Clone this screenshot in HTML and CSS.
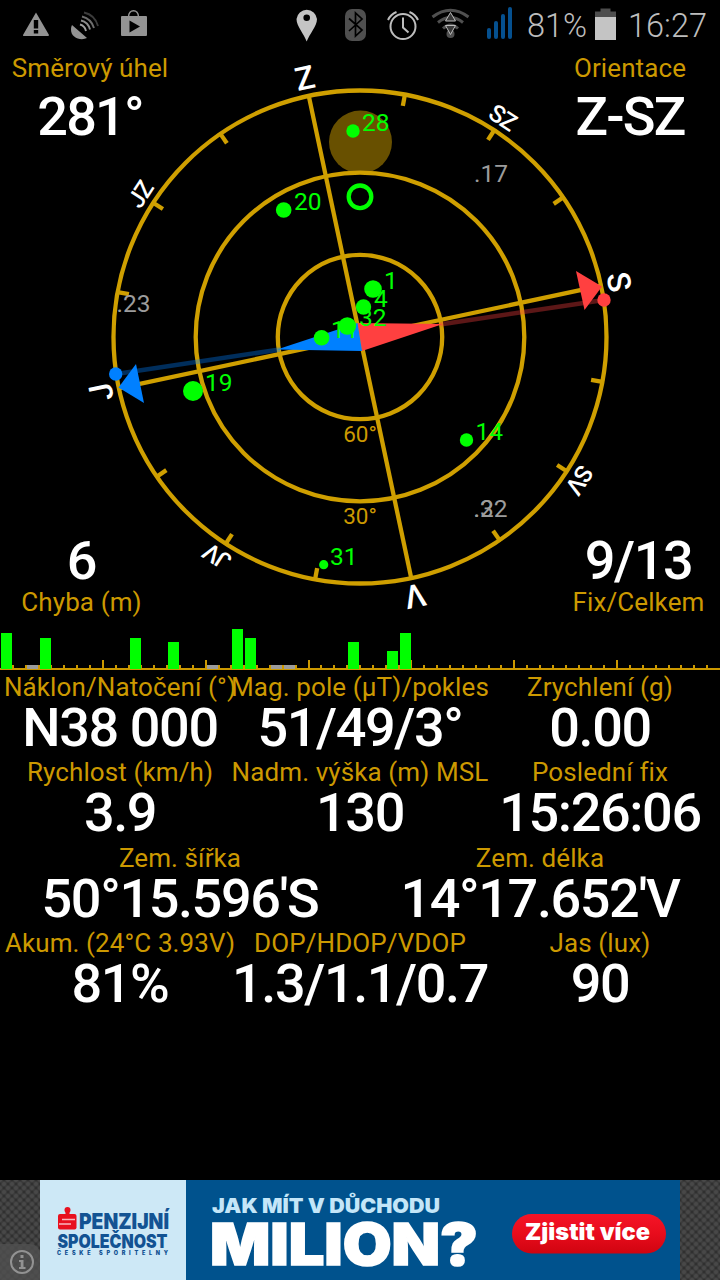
FILE: index.html
```html
<!DOCTYPE html>
<html lang="cs">
<head>
    <meta charset="UTF-8">
    <meta name="viewport" content="width=device-width, initial-scale=1.0">
    <title>GPS Status</title>
    <link rel="stylesheet" href="styles.css">
</head>
<body>
    <header class="status-bar">
        <div class="notifications">
            <svg width="28" height="50" viewBox="22 0 28 50">
                <path fill="#939393" fill-rule="evenodd" d="M36 12.500 L49 35 Q49 36 48 36 H24 Q22.500 36 23 35 Z M33.800 20 V28.500 H38.200 V20 Z M33.800 30 V33.500 H38.200 V30 Z"/>
            </svg>
            <svg width="30" height="50" viewBox="69 0 30 50">
                <path fill="#939393" d="M71 25 L86 38 C80 41 69.500 38 70 29 Q70 27 71 25 Z"/>
                <g fill="none" stroke-width="1.900">
                    <path stroke="#a0a0a0" d="M79 24.500 Q84 26 85 31"/>
                    <path stroke="#8d8d8d" d="M80 20.500 Q87 22 89 29.500"/>
                    <path stroke="#6d6d6d" d="M81 16.500 Q90.500 19 93 28"/>
                    <path stroke="#3c3c3c" d="M83 12.500 Q94 15 97 26"/>
                </g>
            </svg>
            <svg width="28" height="50" viewBox="118 0 28 50">
                <path fill="none" stroke="#939393" stroke-width="1.500" d="M126.500 17 C126.500 8.500 136.500 8.500 136.500 17"/>
                <path fill="#939393" fill-rule="evenodd" d="M119 17 Q119 16 120 16 H144 Q145 16 145 17 V35 Q145 36 144 36 H120 Q119 36 119 35 Z M127.500 20.500 V32.500 L138 26.500 Z"/>
            </svg>
        </div>
        <div class="system">
            <svg width="22" height="50" viewBox="296 0 22 50">
                <path fill="#c4c4c4" fill-rule="evenodd" d="M306.700 41.500 C304 34 296.500 26 296.500 19 A10.300 10.300 0 0 1 317 19 C317 26 309.500 34 306.700 41.500 Z M306.700 14.500 A3.300 3.300 0 1 0 306.700 21.100 A3.300 3.300 0 1 0 306.700 14.500 Z"/>
            </svg>
            <svg width="22" height="50" viewBox="345 0 22 50">
                <rect x="345" y="9" width="21" height="32" rx="7" fill="#4f4f4f"/>
                <path fill="none" stroke="#000" stroke-width="1.700" d="M349 18.500 L362 30 L355.500 36 V13 L362 19 L349 31"/>
            </svg>
            <svg width="34" height="50" viewBox="386 0 34 50">
                <g fill="none" stroke="#bdbdbd" stroke-width="2">
                    <circle cx="403" cy="26.500" r="12.500"/>
                    <path d="M403 17.500 V27.500 L408.500 32.500"/>
                    <path d="M388 20 Q390.500 14.500 396.500 12"/>
                    <path d="M418 20 Q415.500 14.500 409.500 12"/>
                </g>
            </svg>
            <svg width="40" height="50" viewBox="431 0 40 50">
                <g fill="none" stroke="#505050" stroke-width="3">
                    <path d="M432.500 17 Q450.500 3.500 468.500 17"/>
                    <path d="M438 22.500 Q450.500 12.500 463 22.500"/>
                    <path d="M443 28.500 Q450.500 21.500 458 28.500"/>
                </g>
                <circle cx="450.500" cy="34" r="4" fill="#505050"/>
                <path fill="#3a3a3a" stroke="#bdbdbd" stroke-width="1" d="M445.500 21 L450.500 12.500 L455.500 21 Z M445.500 25.500 L450.500 34.500 L455.500 25.500 Z"/>
            </svg>
            <svg width="26" height="50" viewBox="487 0 26 50">
                <g stroke="#05508f" stroke-width="4" stroke-linecap="round">
                    <path d="M489 30 V37"/>
                    <path d="M496 23 V37"/>
                    <path d="M503 16 V37"/>
                    <path d="M510 9 V37"/>
                </g>
            </svg>
            <span class="percent">81%</span>
            <svg width="22" height="50" viewBox="595 0 22 50">
                <path fill="#4d4d4d" d="M595 11.500 H600.500 V8.500 H610.500 V11.500 H616 V17 H595 Z"/>
                <path fill="#c4c4c4" d="M595 17 H616 V40 H595 Z"/>
            </svg>
            <span class="clock">16:27</span>
        </div>
    </header>

    <main>
        <section class="radar">
            <svg class="compass" width="720" height="575" viewBox="0 50 720 575">
                <circle cx="360.500" cy="142" r="31.500" fill="#685000"/>
                <g class="rings">
                    <circle cx="360" cy="337" r="246.500"/>
                    <circle cx="360" cy="337" r="164.300"/>
                    <circle cx="360" cy="337" r="82.200"/>
                </g>
                <g id="rose"></g>
                <g class="elevation">
                    <text x="360" y="441.700">60°</text>
                    <text x="360" y="523.700">30°</text>
                </g>
                <!-- střelka: sever červeně, jih modře -->
                <polygon fill="#ff4040" points="576,271 602,286.500 584.500,310"/>
                <polygon fill="#0080ff" points="118.500,387.500 136,364 144,403"/>
                <path stroke="#ff4040" stroke-opacity="0.360" stroke-width="4.500" d="M440 324.500 L604 300"/>
                <path stroke="#0080ff" stroke-opacity="0.360" stroke-width="4.500" d="M280 349.500 L116 374"/>
                <polygon fill="#ff4040" points="357.500,323 443,324 362,351"/>
                <polygon fill="#0080ff" points="357.500,323 277,349.500 362,351"/>
                <circle cx="604" cy="300" r="6.700" fill="#ff4040"/>
                <circle cx="115.700" cy="374" r="6.700" fill="#0080ff"/>
                <g id="satellites"></g>
                <circle cx="360" cy="196.800" r="11.300" fill="none" stroke="#00ff00" stroke-width="4.300"/>
            </svg>
            <div class="corner top left">
                <div class="label">Směrový úhel</div>
                <div class="value">281°</div>
            </div>
            <div class="corner top right">
                <div class="label">Orientace</div>
                <div class="value">Z-SZ</div>
            </div>
            <div class="corner bottom left">
                <div class="value">6</div>
                <div class="label">Chyba (m)</div>
            </div>
            <div class="corner bottom right">
                <div class="value">9/13</div>
                <div class="label">Fix/Celkem</div>
            </div>
        </section>

        <svg id="signals" class="signals" width="720" height="45" viewBox="0 625 720 45"></svg>

        <section class="readings">
            <div class="row">
                <div class="cell"><div class="label">Náklon/Natočení (°)</div><div class="value">N38 000</div></div>
                <div class="cell"><div class="label">Mag. pole (µT)/pokles</div><div class="value">51/49/3°</div></div>
                <div class="cell"><div class="label">Zrychlení (g)</div><div class="value">0.00</div></div>
            </div>
            <div class="row">
                <div class="cell"><div class="label">Rychlost (km/h)</div><div class="value">3.9</div></div>
                <div class="cell"><div class="label">Nadm. výška (m) MSL</div><div class="value">130</div></div>
                <div class="cell"><div class="label">Poslední fix</div><div class="value">15:26:06</div></div>
            </div>
            <div class="row">
                <div class="cell"><div class="label">Zem. šířka</div><div class="value">50°15.596'S</div></div>
                <div class="cell"><div class="label">Zem. délka</div><div class="value">14°17.652'V</div></div>
            </div>
            <div class="row">
                <div class="cell"><div class="label">Akum. (24°C 3.93V)</div><div class="value">81%</div></div>
                <div class="cell"><div class="label">DOP/HDOP/VDOP</div><div class="value">1.3/1.1/0.7</div></div>
                <div class="cell"><div class="label">Jas (lux)</div><div class="value">90</div></div>
            </div>
        </section>
    </main>

    <footer class="ad">
        <div class="ad-side">
            <div class="ad-info">
                <svg width="26" height="26" viewBox="0 0 26 26">
                    <circle cx="13" cy="13" r="11" fill="none" stroke="#929292" stroke-width="2"/>
                    <path fill="#929292" d="M11.500 6 H14.500 V9 H11.500 Z M10 11 H14.500 V18 H16.500 V20 H10 V18 H11.700 V13 H10 Z"/>
                </svg>
            </div>
        </div>
        <svg class="banner" width="640" height="100" viewBox="40 1180 640 100">
            <defs>
                <linearGradient id="red" x1="0" y1="0" x2="0" y2="1">
                    <stop offset="0" stop-color="#f51427"/>
                    <stop offset="0.500" stop-color="#e80c1c"/>
                    <stop offset="1" stop-color="#d00410"/>
                </linearGradient>
            </defs>
            <rect x="40" y="1180" width="640" height="100" fill="#00528d"/>
            <rect x="40" y="1180" width="146" height="100" fill="#cde8f6"/>
            <g fill="#e8101e">
                <circle cx="67.500" cy="1210" r="3"/>
                <rect x="65.500" y="1211" width="4" height="5"/>
                <rect x="58" y="1214" width="18.500" height="15.500" rx="2"/>
            </g>
            <path d="M62 1219.500 H75 M59 1224 H71" stroke="#f7b8c0" stroke-width="1.300"/>
            <g class="ad-logo">
                <text x="79" y="1229" font-size="21.500" textLength="90" lengthAdjust="spacingAndGlyphs">PENZIJNÍ</text>
                <text x="57.500" y="1248" font-size="18.500" textLength="110" lengthAdjust="spacingAndGlyphs">SPOLEČNOST</text>
                <text x="57" y="1255" font-size="5.500" textLength="111">ČESKÉ SPOŘITELNY</text>
            </g>
            <text class="ad-line" x="212" y="1212.500" font-size="20" textLength="228" lengthAdjust="spacingAndGlyphs">JAK MÍT V DŮCHODU</text>
            <text class="ad-title ad-big" x="210" y="1265" font-size="58" textLength="268" lengthAdjust="spacingAndGlyphs">MILION?</text>
            <rect x="512" y="1214" width="154" height="39.500" rx="19.700" fill="url(#red)"/>
            <text class="ad-title" x="525" y="1240" font-size="22.500" textLength="125" lengthAdjust="spacingAndGlyphs">Zjistit více</text>
        </svg>
        <div class="ad-side"></div>
    </footer>

    <script>
        const cx = 360, cy = 337;
        const north = 78; // natočení severu na displeji

        // Růžice: kříž, dílky po 22,5° a světové strany
        const names = { 0: 'S', 45: 'SV', 90: 'V', 135: 'JV', 180: 'J', 225: 'JZ', 270: 'Z', 315: 'SZ' };
        let rose = '';
        for (let a = 0; a < 360; a += 22.5) {
            const end = a % 90 === 0 ? cy : cy - 235;
            rose += `<g transform="rotate(${a + north} ${cx} ${cy})">`;
            rose += `<path class="tick" d="M${cx} ${cy - 248} V${end}"/>`;
            if (names[a]) {
                const size = a % 90 === 0 ? 'main-dir' : 'side-dir';
                rose += `<text class="${size}" x="${cx}" y="${cy - 253.5}">${names[a]}</text>`;
            }
            rose += '</g>';
        }
        document.getElementById('rose').innerHTML = rose;

        // Družice: číslo, x, y, poloměr, x textu, y textu
        const fixed = [
            ['28', 353, 131, 6.7, 362, 131],
            ['20', 283.7, 210, 7.8, 294, 210],
            ['1', 373, 289, 8.8, 384, 289],
            ['4', 363.5, 307, 7.7, 374, 307],
            ['32', 347.3, 326, 8.8, 359, 326],
            ['11', 321.6, 337.7, 7.8, 331, 338],
            ['19', 193, 391, 10, 205, 391],
            ['14', 466.5, 440, 6.7, 475.5, 440],
            ['31', 323.7, 564.7, 4.6, 330, 565]
        ];
        const weak = [['.17', 474, 182], ['.23', 116.5, 312], ['.22', 473.5, 517], ['.3', 473.5, 517]];
        let sats = '';
        for (const s of fixed) {
            sats += `<circle class="sat" cx="${s[1]}" cy="${s[2]}" r="${s[3]}"/>`;
            sats += `<text class="sat" x="${s[4]}" y="${s[5]}">${s[0]}</text>`;
        }
        for (const s of weak) {
            sats += `<text class="weak" x="${s[1]}" y="${s[2]}">${s[0]}</text>`;
        }
        document.getElementById('satellites').innerHTML = sats;

        // Síla signálu podle čísla družice
        const step = 720 / 56;
        const bars = { 1: 36, 4: 31, 11: 31, 14: 27, 19: 40, 20: 31, 28: 27, 31: 18, 32: 36, 3: 4, 17: 4, 22: 4, 23: 4 };
        let chart = '<rect class="axis" x="0" y="668" width="720" height="2"/>';
        for (let i = 1; i < 56; i++) {
            const h = i % 8 === 0 ? 9 : 4;
            chart += `<rect class="axis" x="${Math.round(i * step - 1)}" y="${669 - h}" width="2" height="${h}"/>`;
        }
        for (const n in bars) {
            const x = Math.round((n - 1) * step + 1);
            chart += `<rect class="${bars[n] > 4 ? 'sat' : 'weak'}" x="${x}" y="${669 - bars[n]}" width="11" height="${bars[n]}"/>`;
        }
        document.getElementById('signals').innerHTML = chart;
    </script>
</body>
</html>
```
FILE: styles.css
```css
body {
    margin: 0;
    width: 720px;
    height: 1280px;
    background-color: #000;
    font-family: Roboto, "Noto Sans", sans-serif;
    display: flex;
    flex-direction: column;
    overflow: hidden;
}

svg {
    display: block;
    flex-shrink: 0;
}

main {
    flex: 1;
}

/* Stavový řádek */
.status-bar {
    height: 50px;
    display: flex;
    justify-content: space-between;
    padding: 0 12px 0 22px;
}

.notifications {
    display: flex;
    gap: 20px;
}

.system {
    display: flex;
    color: #bdbdbd;
    font-size: 32.5px;
    font-weight: 300;
    line-height: 52px;
    white-space: nowrap;
}

.system svg {
    margin-right: 17px;
}

.system svg:nth-of-type(1) {
    margin-right: 27px;
}

.system svg:nth-of-type(2) {
    margin-right: 19px;
}

.system svg:nth-of-type(3) {
    margin-right: 11px;
}

.system svg:nth-of-type(4) {
    margin-right: 16px;
}

.system svg:nth-of-type(5) {
    margin-right: 14px;
}

.system svg:nth-of-type(6) {
    margin-right: 11px;
}

.percent {
    width: 68px;
}

.clock {
    width: 80px;
}

/* Kompas */
.radar {
    display: grid;
    grid-template-columns: 1fr 1fr;
    grid-template-rows: 1fr 1fr;
    height: 575px;
}

.compass {
    grid-area: 1 / 1 / 3 / 3;
}

.corner {
    text-align: center;
    white-space: nowrap;
}

.top {
    width: 180px;
    grid-row: 1;
}

.bottom {
    width: 163px;
    grid-row: 2;
    align-self: end;
    padding-bottom: 6px;
}

.left {
    grid-column: 1;
}

.right {
    grid-column: 2;
    justify-self: end;
}

.label {
    color: #cc9900;
    font-size: 26px;
    line-height: 34px;
    letter-spacing: 0.1px;
}

.value {
    color: #fff;
    font-size: 54px;
    font-weight: 500;
    line-height: 48px;
    letter-spacing: -1.4px;
}

.top .label {
    line-height: 36px;
}

.top .value {
    line-height: 62px;
    letter-spacing: -1.8px;
}

.rings circle {
    fill: none;
    stroke: #cf9f00;
    stroke-width: 4.3;
}

.tick {
    stroke: #cf9f00;
    stroke-width: 4.3;
}

.main-dir,
.side-dir {
    fill: #fff;
    text-anchor: middle;
    font-weight: 500;
}

.main-dir {
    font-size: 32px;
}

.side-dir {
    font-size: 24px;
    letter-spacing: -1px;
}

.elevation {
    fill: #cc9900;
    font-size: 22.5px;
    text-anchor: middle;
}

.sat {
    fill: #00ff00;
    font-size: 24.5px;
}

.weak {
    fill: #9c9c9c;
    font-size: 24.5px;
}

.axis {
    fill: #cc9900;
}

/* Tabulka hodnot */
.row {
    display: flex;
    height: 85.4px;
}

.cell {
    flex: 1 1 0;
    min-width: 0;
    display: flex;
    flex-direction: column;
    align-items: center;
    white-space: nowrap;
}

/* Reklama */
.ad {
    display: flex;
    height: 100px;
}

.ad-side {
    width: 40px;
    display: flex;
    align-items: flex-end;
    background-color: #303030;
    background-image:
        radial-gradient(#484848 25%, transparent 60%),
        radial-gradient(#484848 25%, transparent 60%);
    background-size: 8px 8px;
    background-position: 0 0, 4px 4px;
}

.ad-info {
    width: 40px;
    height: 36px;
    box-sizing: border-box;
    padding: 5px 0 0 9px;
    border-top-right-radius: 10px;
    background-color: rgba(80, 80, 80, 0.8);
}

.banner text {
    font-family: Inter, "Liberation Sans", sans-serif;
    font-weight: 900;
}

.ad-logo {
    fill: #135393;
}

.ad-line {
    fill: #c4e6f8;
}

.ad-title {
    fill: #fff;
}

.ad-big {
    stroke: #fff;
    stroke-width: 1.5;
}
```
